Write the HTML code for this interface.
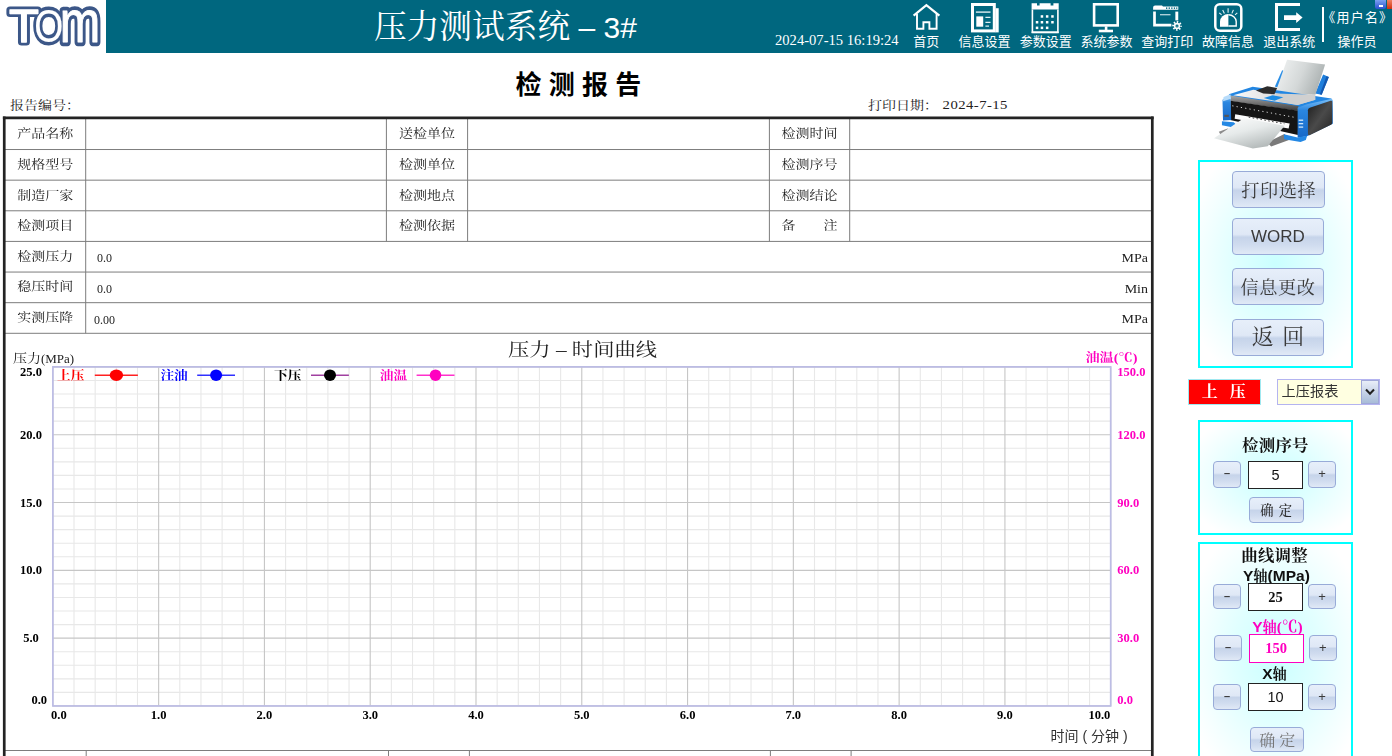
<!DOCTYPE html>
<html lang="zh-CN"><head><meta charset="utf-8"><title>压力测试系统</title>
<style>
html,body{margin:0;padding:0}
body{width:1392px;height:756px;overflow:hidden;position:relative;background:#fff;font-family:"Liberation Sans","Noto Sans CJK SC",sans-serif;color:#000}
.t{position:absolute;white-space:nowrap;line-height:1}
.c{transform:translateX(-50%)}
.sq{transform:scaleY(.88)}
.c.sq{transform:translateX(-50%) scaleY(.88)}
.a{position:absolute}
.song{font-family:"Liberation Serif","Noto Serif CJK SC",serif}
.serif{font-family:"Liberation Serif","Noto Serif CJK SC",serif}
.sans{font-family:"Liberation Sans","Noto Sans CJK SC",sans-serif}
.mono{font-family:"Liberation Mono",monospace}
.b{font-weight:bold}
.nav{color:#fff;font-size:13px}
.lab{font-size:14px;color:#222}
.btn{position:absolute;box-sizing:border-box;border:1px solid #98abd8;border-radius:4px;background:linear-gradient(#e7effa 0%,#dfe8f6 44%,#c6d4ea 52%,#d0dcef 75%,#e0e9f6 100%);color:#3a3a3a;text-align:center;white-space:nowrap}
.panel{position:absolute;box-sizing:border-box;border:2.5px solid #00ffff;background:radial-gradient(ellipse 62% 62% at 50% 50%,#caffff 0%,#e0ffff 45%,#f4ffff 80%,#ffffff 100%)}
.inp{position:absolute;box-sizing:border-box;border:1px solid #222;background:#fff;text-align:center;white-space:nowrap}
</style></head><body>

<div class="a" style="left:106px;top:0;width:1286px;height:53px;background:#00677f"></div>
<svg class="a" style="left:0;top:0;will-change:transform" width="106" height="53" viewBox="0 0 106 53" font-family="'Liberation Sans',sans-serif">
<g fill="#3c5788" stroke="#3c5788" stroke-linejoin="round" stroke-linecap="round">
<text transform="translate(8.9,42.4) scale(1.000,0.955)" font-size="49.0" stroke-width="7.40">T</text>
<text transform="translate(34.3,41.5) scale(1.000,1.250)" font-size="37.4" stroke-width="5.60">O</text>
<text transform="translate(59.8,42.0) scale(1.000,1.220)" font-size="48.6" stroke-width="6.80">m</text>
</g>
<g fill="#ffffff" stroke="#ffffff" stroke-linejoin="round" stroke-linecap="round">
<text transform="translate(8.9,42.4) scale(1.000,0.955)" font-size="49.0" stroke-width="1.40">T</text>
<text transform="translate(34.3,41.5) scale(1.000,1.250)" font-size="37.4" stroke-width="0.10">O</text>
<text transform="translate(59.8,42.0) scale(1.000,1.220)" font-size="48.6" stroke-width="0.80">m</text>
</g>
</svg>
<div class="t" style="left:374px;top:10.7px;font-size:32.7px;color:#fff;font-family:'Liberation Serif','Noto Serif CJK SC',serif">压力测试系统<span style="font-family:'Liberation Sans',sans-serif;font-size:30px"> – 3#</span></div>
<div class="t serif" style="left:775px;top:33px;font-size:14.6px;color:#fff">2024-07-15 16:19:24</div>
<div class="t c nav" style="left:926.3px;top:35px">首页</div>
<div class="t c nav" style="left:984.5px;top:35px">信息设置</div>
<div class="t c nav" style="left:1045.8px;top:35px">参数设置</div>
<div class="t c nav" style="left:1106.5px;top:35px">系统参数</div>
<div class="t c nav" style="left:1167.3px;top:35px">查询打印</div>
<div class="t c nav" style="left:1228.0px;top:35px">故障信息</div>
<div class="t c nav" style="left:1289.3px;top:35px">退出系统</div>
<div class="t c nav" style="left:1357.8px;top:11.3px;font-size:13px;letter-spacing:1.2px">《用户名》</div>
<div class="t c nav" style="left:1357px;top:34.5px">操作员</div>
<div class="a" style="left:1322px;top:6.5px;width:2.3px;height:35px;background:#fff"></div>
<div class="a" style="left:1375px;top:0;width:11px;height:9px;background:linear-gradient(#7aa0f0,#2a50d0);border-radius:0 0 2px 2px"></div>
<div class="a" style="left:1379px;top:5px;width:4px;height:1.5px;background:#fff"></div>
<div class="a" style="left:1387px;top:0;width:5px;height:9px;background:linear-gradient(#f08060,#d03010)"></div>
<svg class="a" style="left:900px;top:0" width="420" height="53" viewBox="900 0 420 53" fill="none" stroke="#fff">
<!-- home -->
<path d="M913.6 15.6L926.4 5.2L939.4 15.6" stroke-width="2.2" stroke-linejoin="miter"/>
<path d="M917 14V28.8H923.4V22.3H929.4V28.8H936.6V14" stroke-width="1.9"/>
<!-- info -->
<rect x="972.5" y="4.5" width="21.8" height="26.4" stroke-width="3"/>
<rect x="995.6" y="8.2" width="3.1" height="24.2" fill="#fff" stroke="none"/>
<path d="M975.9 12.1H990.5" stroke-width="1.4" stroke="#dfeef2"/>
<rect x="976.3" y="16.4" width="6.9" height="10.3" fill="#fff" stroke="none"/>
<path d="M985.4 17.3H990.5M985.4 22.4H990.5M985.4 26.2H989" stroke-width="1.2" stroke="#dfeef2"/>
<!-- calendar -->
<path d="M1031.6 3.2H1037V5.6H1039.6V3.2H1050.6V5.6H1053.4V3.2H1058.7V9.6H1031.6Z" fill="#fff" stroke="none"/>
<path d="M1032.4 9.6V32.2H1057.9V9.6" stroke-width="1.6"/>
<path d="M1031.6 32.4H1058.7" stroke-width="1.8"/>
<g fill="#fff" stroke="none">
<rect x="1040.7" y="15.2" width="2.5" height="2.5"/><rect x="1045.9" y="15.2" width="2.5" height="2.5"/><rect x="1051.2" y="15.2" width="2.5" height="2.5"/>
<rect x="1035.8" y="21" width="2.5" height="2.5"/><rect x="1040.7" y="21" width="2.5" height="2.5"/><rect x="1045.9" y="21" width="2.5" height="2.5"/><rect x="1051.2" y="21" width="2.5" height="2.5"/>
<rect x="1035.8" y="26.6" width="2.5" height="2.5"/><rect x="1040.7" y="26.6" width="2.5" height="2.5"/><rect x="1045.9" y="26.6" width="2.5" height="2.5"/>
</g>
<!-- monitor -->
<rect x="1094.1" y="4.3" width="23.6" height="21.1" stroke-width="2.6"/>
<rect x="1104.8" y="26.4" width="2.6" height="3.6" fill="#fff" stroke="none"/>
<rect x="1098.8" y="29.7" width="14.2" height="2.6" fill="#fff" stroke="none"/>
<!-- query print -->
<path d="M1153.1 9.7V7.6Q1153.1 5.6 1155.1 5.6H1162L1163 6.6H1178.3V9.7Z" fill="#fff" stroke="none"/>
<g fill="#00677f" stroke="none"><rect x="1166" y="7.4" width="1.3" height="1.5"/><rect x="1168.6" y="7.4" width="1.3" height="1.5"/><rect x="1171.2" y="7.4" width="1.3" height="1.5"/><rect x="1173.8" y="7.4" width="1.3" height="1.5"/><rect x="1176.2" y="7.4" width="1.1" height="1.5"/></g>
<path d="M1154.5 11.6V25.1H1171.4" stroke-width="2.7"/>
<path d="M1176.8 11.6V20.4" stroke-width="2.9"/>
<path d="M1160 14.7H1170.5" stroke-width="1.3" stroke="#b8d6de"/>
<circle cx="1177" cy="25.9" r="3.1" fill="#fff" stroke="none"/>
<circle cx="1177" cy="25.9" r="3.9" stroke-width="1.9" stroke-dasharray="1.53 1.53" stroke-dashoffset="0.7"/>
<circle cx="1177" cy="25.9" r="1.5" fill="#00677f" stroke="#9cc4ce" stroke-width="0.8"/>
<!-- alarm -->
<rect x="1215.3" y="4.3" width="26" height="26.4" rx="4.5" ry="4.5" stroke-width="2.5"/>
<path d="M1220 26.7V21.6A8.4 7.6 0 0 1 1228.4 14.1V26.7Z" fill="#fff" stroke="none"/>
<path d="M1228.4 14.8A7.8 7 0 0 1 1236.2 21.6V26H1228.4" stroke-width="1.4"/>
<path d="M1228.1 8.2V12.8M1222.7 9.9L1224.4 13.4M1233.4 9.9L1231.9 13.4M1219.2 12.9L1221.6 14.8M1237.3 12.9L1235 14.8" stroke-width="1.1" stroke="#e6f2f5"/>
<!-- exit -->
<path d="M1300 4.5H1276.5V29.5H1300" stroke-width="3"/>
<path d="M1284 15.3H1296.2V12.2L1302.6 17.6L1296.2 23V19.9H1284Z" fill="#fff" stroke="none"/>
</svg>

<div class="t c sans b" style="left:578.3px;top:72.4px;font-size:26px;color:#000">检 测 报 告</div>
<div class="t song lab sq" style="left:10px;top:99px">报告编号：</div>
<div class="t song lab sq" style="left:868px;top:99px">打印日期：<span style="letter-spacing:.45px;margin-left:.5px;position:relative;top:-2.2px;font-size:1.05em"> 2024-7-15</span></div>
<svg class="a" style="left:0;top:0" width="1392" height="756" viewBox="0 0 1392 756">
<path d="M74.01 366.90V705.95M95.16 366.90V705.95M116.32 366.90V705.95M137.48 366.90V705.95M179.79 366.90V705.95M200.95 366.90V705.95M222.11 366.90V705.95M243.26 366.90V705.95M285.58 366.90V705.95M306.73 366.90V705.95M327.89 366.90V705.95M349.05 366.90V705.95M391.36 366.90V705.95M412.52 366.90V705.95M433.68 366.90V705.95M454.83 366.90V705.95M497.15 366.90V705.95M518.30 366.90V705.95M539.46 366.90V705.95M560.62 366.90V705.95M602.93 366.90V705.95M624.09 366.90V705.95M645.25 366.90V705.95M666.40 366.90V705.95M708.72 366.90V705.95M729.87 366.90V705.95M751.03 366.90V705.95M772.19 366.90V705.95M814.50 366.90V705.95M835.66 366.90V705.95M856.82 366.90V705.95M877.97 366.90V705.95M920.29 366.90V705.95M941.44 366.90V705.95M962.60 366.90V705.95M983.76 366.90V705.95M1026.07 366.90V705.95M1047.23 366.90V705.95M1068.39 366.90V705.95M1089.54 366.90V705.95M52.85 380.46H1110.70M52.85 394.02H1110.70M52.85 407.59H1110.70M52.85 421.15H1110.70M52.85 448.27H1110.70M52.85 461.83H1110.70M52.85 475.40H1110.70M52.85 488.96H1110.70M52.85 516.08H1110.70M52.85 529.64H1110.70M52.85 543.21H1110.70M52.85 556.77H1110.70M52.85 583.89H1110.70M52.85 597.45H1110.70M52.85 611.02H1110.70M52.85 624.58H1110.70M52.85 651.70H1110.70M52.85 665.26H1110.70M52.85 678.83H1110.70M52.85 692.39H1110.70" stroke="#e8e8e8" stroke-width="1.1" fill="none"/>
<path d="M52.85 366.90V705.95M158.64 366.90V705.95M264.42 366.90V705.95M370.21 366.90V705.95M475.99 366.90V705.95M581.78 366.90V705.95M687.56 366.90V705.95M793.35 366.90V705.95M899.13 366.90V705.95M1004.92 366.90V705.95M1110.70 366.90V705.95M52.85 366.90H1110.70M52.85 434.71H1110.70M52.85 502.52H1110.70M52.85 570.33H1110.70M52.85 638.14H1110.70M52.85 705.95H1110.70" stroke="#c6c6c6" stroke-width="1.1" fill="none"/>
<rect x="52.85" y="366.90" width="1057.85" height="339.05" fill="none" stroke="#bdbde5" stroke-width="1.7"/>
<path d="M94.8 375.2H137.9" stroke="#ff2020" stroke-width="1.5"/>
<ellipse cx="116.4" cy="375.2" rx="6.7" ry="5.7" fill="#ff0000"/>
<path d="M197.2 375.2H235.0" stroke="#3030ff" stroke-width="1.5"/>
<ellipse cx="216.1" cy="375.2" rx="6.0" ry="5.8" fill="#0000ff"/>
<path d="M311.0 375.2H348.9" stroke="#a040a0" stroke-width="1.5"/>
<ellipse cx="330.0" cy="375.2" rx="6.0" ry="5.8" fill="#000000"/>
<path d="M416.6 375.2H454.5" stroke="#ff30cc" stroke-width="1.5"/>
<ellipse cx="435.5" cy="375.2" rx="5.8" ry="5.8" fill="#ff00c0"/>
<path d="M5 149.53H1152M5 180.16H1152M5 210.79H1152M5 241.42H1152M5 272.05H1152M5 302.68H1152M5 333.31H1152M85.7 119V333.31M386.4 119V241.42M467.6 119V241.42M769.4 119V241.42M849.7 119V241.42M5 750.5H1152M86.2 750.5V756M388.5 750.5V756M469.4 750.5V756M770.4 750.5V756M851.1 750.5V756" stroke="#7d7d7d" stroke-width="1" fill="none"/>
<path d="M4.25 116.6V756M1152.3 116.6V756" stroke="#232323" stroke-width="2.7" fill="none"/>
<path d="M2.9 117.9H1153.65" stroke="#232323" stroke-width="2.7" fill="none"/>
</svg>
<div class="t c song lab sq" style="left:45.2px;top:127.2px">产品名称</div>
<div class="t c song lab sq" style="left:45.2px;top:157.8px">规格型号</div>
<div class="t c song lab sq" style="left:45.2px;top:188.5px">制造厂家</div>
<div class="t c song lab sq" style="left:45.2px;top:219.1px">检测项目</div>
<div class="t c song lab sq" style="left:45.2px;top:249.7px">检测压力</div>
<div class="t c song lab sq" style="left:45.2px;top:280.4px">稳压时间</div>
<div class="t c song lab sq" style="left:45.2px;top:311.0px">实测压降</div>
<div class="t c song lab sq" style="left:427px;top:127.2px">送检单位</div>
<div class="t c song lab sq" style="left:427px;top:157.8px">检测单位</div>
<div class="t c song lab sq" style="left:427px;top:188.5px">检测地点</div>
<div class="t c song lab sq" style="left:427px;top:219.1px">检测依据</div>
<div class="t c song lab sq" style="left:809.5px;top:127.2px">检测时间</div>
<div class="t c song lab sq" style="left:809.5px;top:157.8px">检测序号</div>
<div class="t c song lab sq" style="left:809.5px;top:188.5px">检测结论</div>
<div class="t c song lab sq" style="left:809.5px;top:219.1px">备　　注</div>
<div class="t c serif" style="left:104.5px;top:252.2px;font-size:12px;color:#222">0.0</div>
<div class="t serif sq" style="right:244.0px;top:251.1px;font-size:14px;color:#222">MPa</div>
<div class="t c serif" style="left:104.5px;top:282.9px;font-size:12px;color:#222">0.0</div>
<div class="t serif sq" style="right:244.0px;top:281.8px;font-size:14px;color:#222">Min</div>
<div class="t c serif" style="left:104.5px;top:313.5px;font-size:12px;color:#222">0.00</div>
<div class="t serif sq" style="right:244.0px;top:312.4px;font-size:14px;color:#222">MPa</div>
<div class="t c sq" style="left:582.5px;top:339.9px;font-size:21.3px;color:#222;font-family:'Liberation Serif','Noto Serif CJK SC',serif">压力<span class="serif"> – </span>时间曲线</div>
<div class="t sq" style="left:12.9px;top:351.9px;font-size:14px;color:#222;font-family:'Liberation Serif','Noto Serif CJK SC',serif">压力<span class="serif" style="font-size:13px">(MPa)</span></div>
<div class="t b sq" style="right:254.6px;top:350.95px;font-size:14.2px;color:#ff00c0;font-family:'Liberation Serif','Noto Serif CJK SC',serif">油温<span class="serif">(℃)</span></div>
<div class="t c serif b" style="left:31.0px;top:365.9px;font-size:12.5px">25.0</div>
<div class="t serif b" style="left:1117.3px;top:365.9px;font-size:12.5px;color:#ff00c0">150.0</div>
<div class="t c serif b" style="left:31.0px;top:428.7px;font-size:12.5px">20.0</div>
<div class="t serif b" style="left:1117.3px;top:428.7px;font-size:12.5px;color:#ff00c0">120.0</div>
<div class="t c serif b" style="left:31.0px;top:496.5px;font-size:12.5px">15.0</div>
<div class="t serif b" style="left:1117.3px;top:496.5px;font-size:12.5px;color:#ff00c0">90.0</div>
<div class="t c serif b" style="left:31.0px;top:564.3px;font-size:12.5px">10.0</div>
<div class="t serif b" style="left:1117.3px;top:564.3px;font-size:12.5px;color:#ff00c0">60.0</div>
<div class="t c serif b" style="left:31.0px;top:632.1px;font-size:12.5px">5.0</div>
<div class="t serif b" style="left:1117.3px;top:632.1px;font-size:12.5px;color:#ff00c0">30.0</div>
<div class="t c serif b" style="left:39.3px;top:694.3px;font-size:12.5px">0.0</div>
<div class="t serif b" style="left:1117.3px;top:694.3px;font-size:12.5px;color:#ff00c0">0.0</div>
<div class="t serif b" style="left:51px;top:709px;font-size:12.5px">0.0</div>
<div class="t c serif b" style="left:158.6px;top:709px;font-size:12.5px">1.0</div>
<div class="t c serif b" style="left:264.4px;top:709px;font-size:12.5px">2.0</div>
<div class="t c serif b" style="left:370.2px;top:709px;font-size:12.5px">3.0</div>
<div class="t c serif b" style="left:476.0px;top:709px;font-size:12.5px">4.0</div>
<div class="t c serif b" style="left:581.8px;top:709px;font-size:12.5px">5.0</div>
<div class="t c serif b" style="left:687.6px;top:709px;font-size:12.5px">6.0</div>
<div class="t c serif b" style="left:793.3px;top:709px;font-size:12.5px">7.0</div>
<div class="t c serif b" style="left:899.1px;top:709px;font-size:12.5px">8.0</div>
<div class="t c serif b" style="left:1004.9px;top:709px;font-size:12.5px">9.0</div>
<div class="t serif b" style="right:281.7px;top:709px;font-size:12.5px">10.0</div>
<div class="t sans" style="left:1050.6px;top:729px;font-size:14px;color:#333">时间 ( 分钟 )</div>
<div class="t b sq" style="left:57.1px;top:369.4px;font-size:13.7px;color:#ff0000;font-family:'Liberation Serif','Noto Serif CJK SC',serif">上压</div>
<div class="t b sq" style="left:160.4px;top:369.4px;font-size:13.7px;color:#0000ff;font-family:'Liberation Serif','Noto Serif CJK SC',serif">注油</div>
<div class="t b sq" style="left:274.0px;top:369.4px;font-size:13.7px;color:#000;font-family:'Liberation Serif','Noto Serif CJK SC',serif">下压</div>
<div class="t b sq" style="left:379.7px;top:369.4px;font-size:13.7px;color:#ff00c0;font-family:'Liberation Serif','Noto Serif CJK SC',serif">油温</div>
<svg class="a" style="left:1205px;top:55px" width="140" height="100" viewBox="0 0 1058 756">
<defs>
<linearGradient id="pg1" x1="0" y1="0" x2="1" y2="0.3"><stop offset="0" stop-color="#f4f6f6"/><stop offset="0.6" stop-color="#d4d8d8"/><stop offset="1" stop-color="#aeb4b4"/></linearGradient>
<linearGradient id="pg2" x1="0" y1="0" x2="0.6" y2="1"><stop offset="0" stop-color="#ffffff"/><stop offset="0.5" stop-color="#e6eaea"/><stop offset="1" stop-color="#b4baba"/></linearGradient>
<linearGradient id="pg3" x1="0" y1="0" x2="0" y2="1"><stop offset="0" stop-color="#a8a8a8"/><stop offset="1" stop-color="#3a3a3a"/></linearGradient>
<linearGradient id="pg4" x1="0" y1="0" x2="1" y2="1"><stop offset="0" stop-color="#1c1c1c"/><stop offset="0.5" stop-color="#4a4a4a"/><stop offset="1" stop-color="#222"/></linearGradient>
<linearGradient id="pg5" x1="0" y1="0" x2="0" y2="1"><stop offset="0" stop-color="#7cc0f8"/><stop offset="0.3" stop-color="#2a86e0"/><stop offset="1" stop-color="#1668c8"/></linearGradient>
<linearGradient id="pg6" x1="0" y1="0" x2="1" y2="0"><stop offset="0" stop-color="#fafafa"/><stop offset="1" stop-color="#c4c4c4"/></linearGradient>
</defs>
<!-- supports and back paper -->
<polygon points="583,116 608,124 548,245 528,238" fill="#2a8ee6"/>
<polygon points="893,148 936,166 882,300 832,292" fill="#1f7fdc"/>
<polygon points="918,160 936,166 882,300 868,296" fill="#1458b0"/>
<polygon points="620,36 908,72 834,300 530,292" fill="url(#pg1)"/>
<!-- top rim blue -->
<polygon points="180,296 360,240 955,328 965,350 765,400 700,398 190,318" fill="#2286e2"/>
<!-- top surface -->
<polygon points="212,304 365,262 835,338 700,378" fill="url(#pg6)"/>
<polygon points="385,268 470,236 545,250 525,296 440,292" fill="#2c2c2c"/>
<polygon points="530,292 834,300 835,338 700,378 560,352" fill="#d0d0d0"/>
<polygon points="528,262 620,60 700,120 640,330" fill="url(#pg1)" opacity="0"/>
<polygon points="444,326 512,304 592,320 526,346" fill="#1c8ce4"/>
<!-- front face -->
<polygon points="192,306 706,386 706,424 192,348" fill="url(#pg3)"/>
<polygon points="192,346 706,422 702,604 190,492" fill="#151515"/>
<path d="M206 384L692 474" stroke="#e8e8e8" stroke-width="7" stroke-dasharray="9 24" fill="none"/>
<polygon points="228,448 640,518 632,556 224,482" fill="#fbfbfb"/>
<path d="M330 470L600 520" stroke="#333" stroke-width="7" stroke-dasharray="12 18" fill="none"/>
<!-- left blue strip -->
<polygon points="132,338 192,302 198,492 136,496" fill="url(#pg5)"/>
<polygon points="140,318 192,296 196,330 136,350" fill="#b8dcfa"/>
<rect x="146" y="452" width="34" height="16" fill="#555"/>
<!-- right blue strip + dark side -->
<polygon points="700,398 770,372 960,330 966,350 966,520 770,614 700,626" fill="url(#pg5)"/>
<path d="M778 418Q778 404 792 398L950 346Q962 343 962 356V512Q962 522 952 527L790 606Q778 610 778 598Z" fill="url(#pg4)"/>
<rect x="708" y="488" width="34" height="10" fill="#cfe6fa"/><rect x="708" y="514" width="34" height="10" fill="#cfe6fa"/><rect x="708" y="540" width="34" height="10" fill="#cfe6fa"/>
<!-- tray -->
<polygon points="104,580 170,556 230,580 120,606" fill="#8c8c8c"/>
<polygon points="470,660 600,598 640,640 500,692" fill="#7a7a7a"/>
<!-- feet -->
<polygon points="128,500 216,508 238,528 214,548 128,532" fill="#2488e4"/>
<polygon points="596,600 700,624 772,610 762,642 722,658 598,636" fill="#2488e4"/>
<!-- output paper -->
<polygon points="292,478 602,534 474,690 362,706 68,630" fill="url(#pg2)"/>
</svg>

<div class="panel" style="left:1198px;top:159.5px;width:155px;height:208.8px"></div>
<div class="btn" style="left:1232.4px;top:171.1px;width:92.7px;height:36.8px;font-size:18.20px;line-height:38.4px;letter-spacing:.5px;font-family:'Liberation Serif','Noto Serif CJK SC',serif">打印选择</div>
<div class="btn" style="left:1231.8px;top:218.1px;width:92.3px;height:36.8px;font-size:17.00px;line-height:35.0px;font-family:'Liberation Sans','Noto Sans CJK SC',sans-serif">WORD</div>
<div class="btn" style="left:1231.8px;top:268.2px;width:92.3px;height:36.8px;font-size:18.20px;line-height:38.4px;letter-spacing:.5px;font-family:'Liberation Serif','Noto Serif CJK SC',serif">信息更改</div>
<div class="btn" style="left:1231.8px;top:319.3px;width:92.3px;height:36.8px;font-size:22.00px;line-height:33.7px;word-spacing:3px;font-family:'Liberation Serif','Noto Serif CJK SC',serif">返 回</div>
<div class="a" style="left:1188px;top:379px;width:72.7px;height:26px;background:#ff0000;box-sizing:border-box;border:1px solid #a0e8f0"></div>
<div class="t c b" style="left:1223.8px;top:384.2px;font-size:16px;word-spacing:8px;color:#fff;font-family:'Liberation Serif','Noto Serif CJK SC',serif">上 压</div>
<div class="a" style="left:1277.4px;top:379px;width:102.4px;height:26px;background:#ffffe1;box-sizing:border-box;border:1px solid #b4b4f0"></div>
<div class="a" style="left:1361.3px;top:380px;width:17.5px;height:24px;background:linear-gradient(#e8eef8 0%,#c8d4e8 50%,#a8bcd8 100%);box-sizing:border-box;border:1px solid #a0a8d8"></div>
<svg class="a" style="left:1364px;top:387px" width="12" height="10" viewBox="0 0 12 10"><path d="M2 2.5L6 6.8L10 2.5" fill="none" stroke="#222" stroke-width="2"/></svg>
<div class="t sans" style="left:1281.6px;top:384.2px;font-size:14.2px;color:#333">上压报表</div>
<div class="panel" style="left:1198px;top:419.5px;width:155px;height:115.8px"></div>
<div class="t c b" style="left:1275.4px;top:437.55px;font-size:16.4px;letter-spacing:.3px;color:#111;font-family:'Liberation Serif','Noto Serif CJK SC',serif">检测序号</div>
<div class="btn" style="left:1213.2px;top:461.4px;width:27.6px;height:26.4px;font-size:11px;font-weight:bold;line-height:23.4px;font-family:'Liberation Sans','Noto Sans CJK SC',sans-serif">–</div>
<div class="btn" style="left:1308.2px;top:461.4px;width:27.6px;height:26.4px;font-size:13px;line-height:24.4px;font-family:'Liberation Sans','Noto Sans CJK SC',sans-serif">+</div>
<div class="inp sans" style="left:1248px;top:460.6px;width:55px;height:28.6px;font-size:14.5px;line-height:26.6px;color:#111">5</div>
<div class="btn" style="left:1248.8px;top:497.1px;width:54.8px;height:26.2px;font-size:13.3px;font-weight:500;word-spacing:2px;color:#2a2a2a;line-height:26.5px;font-family:'Liberation Serif','Noto Serif CJK SC',serif">确 定</div>
<div class="panel" style="left:1198.4px;top:542.3px;width:154.6px;height:230px"></div>
<div class="t c b" style="left:1274.6px;top:547.85px;font-size:16.4px;letter-spacing:.3px;color:#111;font-family:'Liberation Serif','Noto Serif CJK SC',serif">曲线调整</div>
<div class="t c b" style="left:1276.4px;top:567.5px;font-size:15.5px;color:#111;font-family:'Liberation Sans','Noto Serif CJK SC',sans-serif">Y<span style="font-size:.92em">轴</span>(MPa)</div>
<div class="btn" style="left:1213.2px;top:584.3px;width:27.6px;height:25.2px;font-size:11px;font-weight:bold;line-height:22.2px;font-family:'Liberation Sans','Noto Sans CJK SC',sans-serif">–</div>
<div class="btn" style="left:1308.2px;top:584.3px;width:27.6px;height:25.2px;font-size:13px;line-height:23.2px;font-family:'Liberation Sans','Noto Sans CJK SC',sans-serif">+</div>
<div class="inp serif b" style="left:1248px;top:583.4px;width:55px;height:28px;font-size:14.5px;line-height:26px;color:#111">25</div>
<div class="t c b" style="left:1277.4px;top:618.5px;font-size:15.5px;color:#ff00c0;font-family:'Liberation Sans','Noto Serif CJK SC',sans-serif">Y<span style="font-size:.92em">轴</span><span class="serif">(℃)</span></div>
<div class="btn" style="left:1214.3px;top:635.1px;width:27.6px;height:25.5px;font-size:11px;font-weight:bold;line-height:22.5px;font-family:'Liberation Sans','Noto Sans CJK SC',sans-serif">–</div>
<div class="btn" style="left:1309.0px;top:635.1px;width:27.6px;height:25.5px;font-size:13px;line-height:23.5px;font-family:'Liberation Sans','Noto Sans CJK SC',sans-serif">+</div>
<div class="inp serif b" style="left:1248.6px;top:634.3px;width:55.1px;height:28.6px;font-size:14.5px;line-height:26.6px;color:#ff00c0;border-color:#ff00c0">150</div>
<div class="t c b" style="left:1274.5px;top:666px;font-size:15.5px;color:#111;font-family:'Liberation Sans','Noto Serif CJK SC',sans-serif">X<span style="font-size:.92em">轴</span></div>
<div class="btn" style="left:1213.2px;top:684.3px;width:27.6px;height:25.7px;font-size:11px;font-weight:bold;line-height:22.7px;font-family:'Liberation Sans','Noto Sans CJK SC',sans-serif">–</div>
<div class="btn" style="left:1308.2px;top:684.3px;width:27.6px;height:25.7px;font-size:13px;line-height:23.7px;font-family:'Liberation Sans','Noto Sans CJK SC',sans-serif">+</div>
<div class="inp sans" style="left:1248px;top:682.9px;width:55px;height:28.5px;font-size:14.5px;line-height:26.5px;color:#111">10</div>
<div class="btn" style="left:1250px;top:726.6px;width:54.3px;height:25.7px;font-size:16px;line-height:26px;color:#777;font-family:'Liberation Serif','Noto Serif CJK SC',serif">确 定</div>
</body></html>
